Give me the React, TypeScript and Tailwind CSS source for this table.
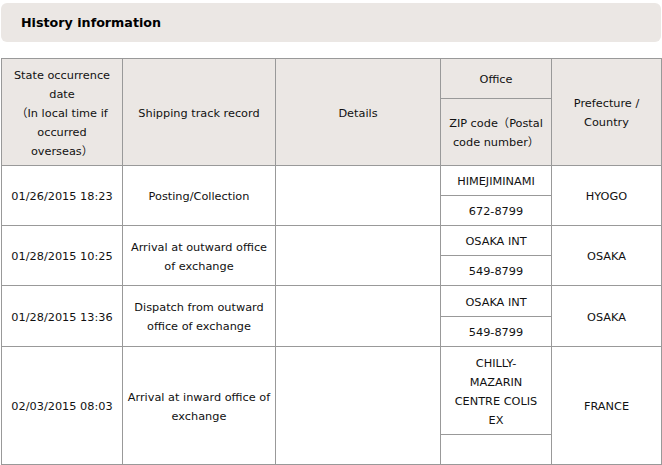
import React from "react";

const rows = [
  { date: "01/26/2015 18:23", rec: ["Posting/Collection"], office: "HIMEJIMINAMI", zip: "672-8799", pref: "HYOGO", h1: 30, h2: 30 },
  { date: "01/28/2015 10:25", rec: ["Arrival at outward office", "of exchange"], office: "OSAKA INT", zip: "549-8799", pref: "OSAKA", h1: 30, h2: 30 },
  { date: "01/28/2015 13:36", rec: ["Dispatch from outward", "office of exchange"], office: "OSAKA INT", zip: "549-8799", pref: "OSAKA", h1: 31, h2: 30 },
  { date: "02/03/2015 08:03", rec: ["Arrival at inward office of", "exchange"], office: ["CHILLY-", "MAZARIN", "CENTRE COLIS", "EX"], zip: "", pref: "FRANCE", h1: 88, h2: 30 },
];

const td = "border border-[#999] text-center align-middle pt-[2px] pb-0";

export default function App() {
  return (
    <div className="w-[662px] h-[465px] bg-white text-[#111] text-[11.3px] leading-[19px]" style={{ fontFamily: '"DejaVu Sans", "Noto Sans CJK JP", sans-serif' }}>
      <div className="pt-[3px] px-[1px]">
        <div className="h-[39px] rounded-[6px] bg-[#ebe7e4] flex items-center pl-[20px] text-[12.7px] font-bold text-black">
          History information
        </div>
      </div>
      <table className="mt-[16px] ml-[1px] w-[660px] border-collapse table-fixed">
        <colgroup>
          <col className="w-[121px]" />
          <col className="w-[153px]" />
          <col className="w-[165px]" />
          <col className="w-[111px]" />
          <col className="w-[110px]" />
        </colgroup>
        <tbody>
          <tr className="bg-[#ebe7e4]">
            <td rowSpan={2} className={`${td} px-[8px]`}>
              State occurrence date<br />（In local time if occurred overseas）
            </td>
            <td rowSpan={2} className={td}>Shipping track record</td>
            <td rowSpan={2} className={td}>Details</td>
            <td className={`${td} h-[40px]`}>Office</td>
            <td rowSpan={2} className={`${td} px-[8px]`}>Prefecture / Country</td>
          </tr>
          <tr className="bg-[#ebe7e4]">
            <td className={`${td} h-[67px] px-[4px]`}>ZIP code（Postal code number）</td>
          </tr>
          {rows.map((r, i) => (
            <React.Fragment key={i}>
              <tr>
                <td rowSpan={2} className={td}>{r.date}</td>
                <td rowSpan={2} className={td}>
                  {r.rec.map((l, j) => (
                    <div key={j}>{l}</div>
                  ))}
                </td>
                <td rowSpan={2} className={td}></td>
                <td className={td} style={{ height: r.h1 }}>
                  {Array.isArray(r.office) ? r.office.map((l, j) => <div key={j}>{l}</div>) : r.office}
                </td>
                <td rowSpan={2} className={td}>{r.pref}</td>
              </tr>
              <tr>
                <td className={td} style={{ height: r.h2 }}>{r.zip}</td>
              </tr>
            </React.Fragment>
          ))}
        </tbody>
      </table>
    </div>
  );
}
